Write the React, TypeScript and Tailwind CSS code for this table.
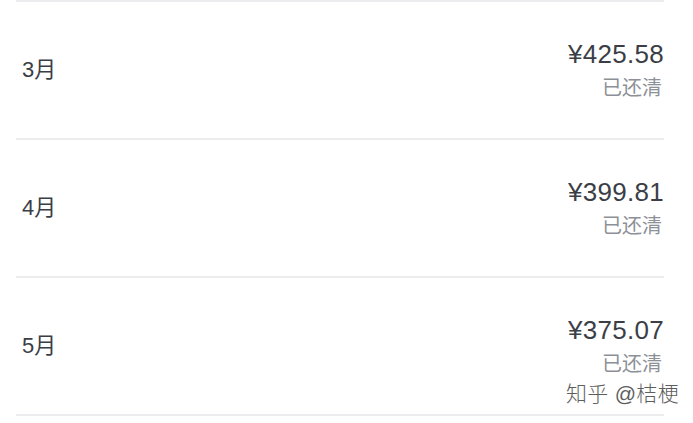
const rows = [
  { month: "3月", amount: "¥425.58", status: "已还清" },
  { month: "4月", amount: "¥399.81", status: "已还清" },
  { month: "5月", amount: "¥375.07", status: "已还清" },
];

const font = "font-['Liberation_Sans','Noto_Sans_CJK_SC',sans-serif]";

function BillRow({ month, amount, status }: { month: string; amount: string; status: string }) {
  return (
    <div className="flex h-[138px] items-center justify-between border-t-2 border-[#ececee]">
      <span className="pl-[6px] text-[22px] leading-[28px] text-[#3b3e46]">{month}</span>
      <div className="flex flex-col items-end">
        <span className="text-[26px] leading-[30px] tracking-[0.3px] text-[#3b3e46]">{amount}</span>
        <span className="mt-[6px] pr-[2px] text-[20px] leading-[27px] text-[#8d9097]">{status}</span>
      </div>
    </div>
  );
}

export default function App() {
  return (
    <div className={`relative h-[423px] w-[693px] overflow-hidden bg-white ${font}`}>
      <div className="ml-[16px] w-[648px]">
        {rows.map((r) => (
          <BillRow key={r.month} {...r} />
        ))}
        <div className="border-t-2 border-[#ececee]" />
      </div>
      <div className="absolute left-[566px] top-[379px] text-[21px] font-light leading-[29px] tracking-[0.3px] text-[#5e5e5e] [text-shadow:0_0_2px_#fff,0_0_2px_#fff]">
        知乎 @桔梗
      </div>
    </div>
  );
}
